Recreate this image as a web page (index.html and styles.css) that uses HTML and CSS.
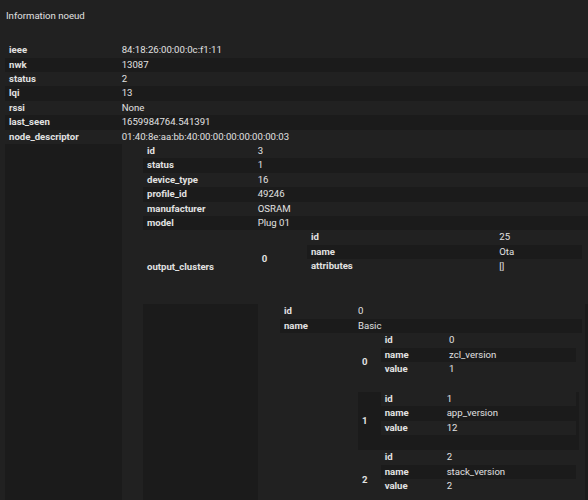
FILE: index.html
```
<!DOCTYPE html>
<html lang="fr">
<head>
<meta charset="utf-8">
<title>Information noeud</title>
<link rel="stylesheet" href="styles.css">
</head>
<body>
<div class="page">
  <div class="title">Information noeud</div>
  <table class="tbl tbl-root">
    <tr><th>ieee</th><td>84:18:26:00:00:0c:f1:11</td></tr>
    <tr><th>nwk</th><td>13087</td></tr>
    <tr><th>status</th><td>2</td></tr>
    <tr><th>lqi</th><td>13</td></tr>
    <tr><th>rssi</th><td>None</td></tr>
    <tr><th>last_seen</th><td>1659984764.541391</td></tr>
    <tr><th>node_descriptor</th><td>01:40:8e:aa:bb:40:00:00:00:00:00:00:03</td></tr>
    <tr><th>endpoints</th><td>
      <table class="tbl tbl-nested list-ep">
        <tr><th>0</th><td>
          <table class="tbl tbl-nested dict-ep">
            <tr><th>id</th><td>3</td></tr>
            <tr><th>status</th><td>1</td></tr>
            <tr><th>device_type</th><td>16</td></tr>
            <tr><th>profile_id</th><td>49246</td></tr>
            <tr><th>manufacturer</th><td>OSRAM</td></tr>
            <tr><th>model</th><td>Plug 01</td></tr>
            <tr><th>output_clusters</th><td>
              <table class="tbl tbl-nested list-out">
                <tr><th>0</th><td>
                  <table class="tbl tbl-nested dict-out">
                    <tr><th>id</th><td>25</td></tr>
                    <tr><th>name</th><td>Ota</td></tr>
                    <tr><th>attributes</th><td>[]</td></tr>
                  </table>
                </td></tr>
              </table>
            </td></tr>
            <tr><th>input_clusters</th><td>
              <table class="tbl tbl-nested list-in">
                <tr><th>0</th><td>
                  <table class="tbl tbl-nested dict-in">
                    <tr><th>id</th><td>0</td></tr>
                    <tr><th>name</th><td>Basic</td></tr>
                    <tr><th>attributes</th><td>
                      <table class="tbl tbl-nested list-attr">
                        <tr><th>0</th><td>
                          <table class="tbl tbl-nested dict-attr dict-attr-wide">
                            <tr><th>id</th><td>0</td></tr>
                            <tr><th>name</th><td>zcl_version</td></tr>
                            <tr><th>value</th><td>1</td></tr>
                          </table>
                        </td></tr>
                        <tr><th>1</th><td>
                          <table class="tbl tbl-nested dict-attr">
                            <tr><th>id</th><td>1</td></tr>
                            <tr><th>name</th><td>app_version</td></tr>
                            <tr><th>value</th><td>12</td></tr>
                          </table>
                        </td></tr>
                        <tr><th>2</th><td>
                          <table class="tbl tbl-nested dict-attr">
                            <tr><th>id</th><td>2</td></tr>
                            <tr><th>name</th><td>stack_version</td></tr>
                            <tr><th>value</th><td>2</td></tr>
                          </table>
                        </td></tr>
                        <tr><th>3</th><td>
                          <table class="tbl tbl-nested dict-attr">
                            <tr><th>id</th><td>3</td></tr>
                            <tr><th>name</th><td>hw_version</td></tr>
                            <tr><th>value</th><td>1</td></tr>
                          </table>
                        </td></tr>
                        <tr><th>4</th><td>
                          <table class="tbl tbl-nested dict-attr">
                            <tr><th>id</th><td>4</td></tr>
                            <tr><th>name</th><td>manufacturer</td></tr>
                            <tr><th>value</th><td>OSRAM</td></tr>
                          </table>
                        </td></tr>
                        <tr><th>5</th><td>
                          <table class="tbl tbl-nested dict-attr">
                            <tr><th>id</th><td>5</td></tr>
                            <tr><th>name</th><td>model</td></tr>
                            <tr><th>value</th><td>Plug 01</td></tr>
                          </table>
                        </td></tr>
                        <tr><th>6</th><td>
                          <table class="tbl tbl-nested dict-attr">
                            <tr><th>id</th><td>6</td></tr>
                            <tr><th>name</th><td>date_code</td></tr>
                            <tr><th>value</th><td>20140331</td></tr>
                          </table>
                        </td></tr>
                        <tr><th>7</th><td>
                          <table class="tbl tbl-nested dict-attr">
                            <tr><th>id</th><td>7</td></tr>
                            <tr><th>name</th><td>power_source</td></tr>
                            <tr><th>value</th><td>1</td></tr>
                          </table>
                        </td></tr>
                      </table>
                    </td></tr>
                  </table>
                </td></tr>
              </table>
            </td></tr>
          </table>
        </td></tr>
      </table>
    </td></tr>
  </table>
</div>
</body>
</html>
```
FILE: styles.css
```
html {
  overflow: hidden;
  background: #212121;
}
body {
  margin: 0;
  background: #212121;
  color: #e1e1e1;
  font-family: Roboto, "Noto Sans", sans-serif;
  font-size: 9.6px;
  line-height: 14.4px;
}
.page {
  padding: 9px 0 0 5px;
  overflow: hidden;
}
.title {
  padding-left: 1px;
  margin-bottom: 19.7px;
}
.tbl {
  border-spacing: 0;
  background: #212121;
}
.tbl-root {
  width: 589px;
}
.tbl-nested {
  width: 100%;
  margin-bottom: 15.4px;
}
.tbl tr:nth-child(even) {
  background: #1b1b1b;
}
.tbl th {
  text-align: left;
  font-weight: 700;
  padding: 0 4px;
  vertical-align: middle;
  white-space: nowrap;
}
.tbl td {
  padding: 0 3px 0 0;
  vertical-align: middle;
  white-space: nowrap;
}

/* key column widths (content box, 4px padding each side) */
.tbl-root > tbody > tr > th { width: 108.7px; }
.list-ep > tbody > tr > th { width: 13.3px; }
.dict-ep > tbody > tr > th { width: 106.7px; }
.list-out > tbody > tr > th { width: 41.3px; }
.dict-out > tbody > tr > th { width: 184.3px; }
.list-in > tbody > tr > th { width: 14.3px; }
.dict-in > tbody > tr > th { width: 70px; }
.list-attr > tbody > tr > th { width: 14.7px; }
.dict-attr > tbody > tr > th { width: 58px; }
.dict-attr-wide > tbody > tr > th { width: 60.3px; }
```
